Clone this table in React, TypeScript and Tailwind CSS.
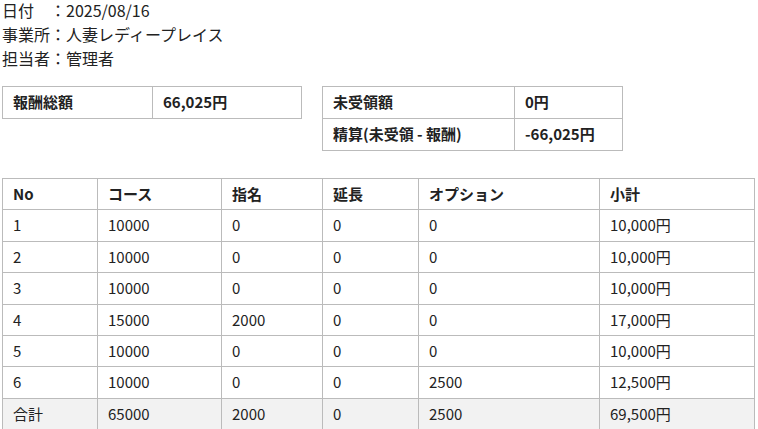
const rows = [
  { no: '1', course: '10000', shimei: '0', encho: '0', option: '0', subtotal: '10,000円' },
  { no: '2', course: '10000', shimei: '0', encho: '0', option: '0', subtotal: '10,000円' },
  { no: '3', course: '10000', shimei: '0', encho: '0', option: '0', subtotal: '10,000円' },
  { no: '4', course: '15000', shimei: '2000', encho: '0', option: '0', subtotal: '17,000円' },
  { no: '5', course: '10000', shimei: '0', encho: '0', option: '0', subtotal: '10,000円' },
  { no: '6', course: '10000', shimei: '0', encho: '0', option: '2500', subtotal: '12,500円' },
];

const font = { fontFamily: '"Noto Sans CJK JP", "Liberation Sans", sans-serif' };

function SummaryRow({ label, value, labelW }: { label: string; value: string; labelW: string }) {
  return (
    <tr className="h-[32px]">
      <td className={`border border-[#bbbbbb] px-[10px] font-bold ${labelW}`}>{label}</td>
      <td className="border border-[#bbbbbb] px-[10px] font-bold">{value}</td>
    </tr>
  );
}

export default function App() {
  const cell = 'border border-[#bbbbbb] px-[10px] text-left';
  return (
    <div className="w-[758px] h-[429px] overflow-hidden bg-white text-[#222222] px-[2px]" style={font}>
      <div className="flex flex-col gap-[4px] text-[16px] leading-[20px]">
        <div>日付　：2025/08/16</div>
        <div>事業所：人妻レディープレイス</div>
        <div>担当者：管理者</div>
      </div>

      <div className="mt-[18px] flex items-start gap-[20px] text-[15px]">
        <table className="w-[300px] border-collapse">
          <tbody>
            <SummaryRow label="報酬総額" value="66,025円" labelW="w-[150px]" />
          </tbody>
        </table>
        <table className="w-[301px] border-collapse">
          <tbody>
            <SummaryRow label="未受領額" value="0円" labelW="w-[192px]" />
            <SummaryRow label="精算(未受領 - 報酬)" value="-66,025円" labelW="w-[192px]" />
          </tbody>
        </table>
      </div>

      <table className="mt-[27px] w-[752px] border-collapse text-[15px] table-fixed">
        <colgroup>
          <col className="w-[95px]" />
          <col className="w-[124px]" />
          <col className="w-[101px]" />
          <col className="w-[96px]" />
          <col className="w-[181px]" />
          <col className="w-[155px]" />
        </colgroup>
        <thead>
          <tr className="h-[31.4px] font-bold">
            <th className={cell}>No</th>
            <th className={cell}>コース</th>
            <th className={cell}>指名</th>
            <th className={cell}>延長</th>
            <th className={cell}>オプション</th>
            <th className={cell}>小計</th>
          </tr>
        </thead>
        <tbody>
          {rows.map((r) => (
            <tr key={r.no} className="h-[31.4px]">
              <td className={cell}>{r.no}</td>
              <td className={cell}>{r.course}</td>
              <td className={cell}>{r.shimei}</td>
              <td className={cell}>{r.encho}</td>
              <td className={cell}>{r.option}</td>
              <td className={cell}>{r.subtotal}</td>
            </tr>
          ))}
          <tr className="h-[31.4px] bg-[#f2f2f2]">
            <td className={cell}>合計</td>
            <td className={cell}>65000</td>
            <td className={cell}>2000</td>
            <td className={cell}>0</td>
            <td className={cell}>2500</td>
            <td className={cell}>69,500円</td>
          </tr>
        </tbody>
      </table>
    </div>
  );
}
